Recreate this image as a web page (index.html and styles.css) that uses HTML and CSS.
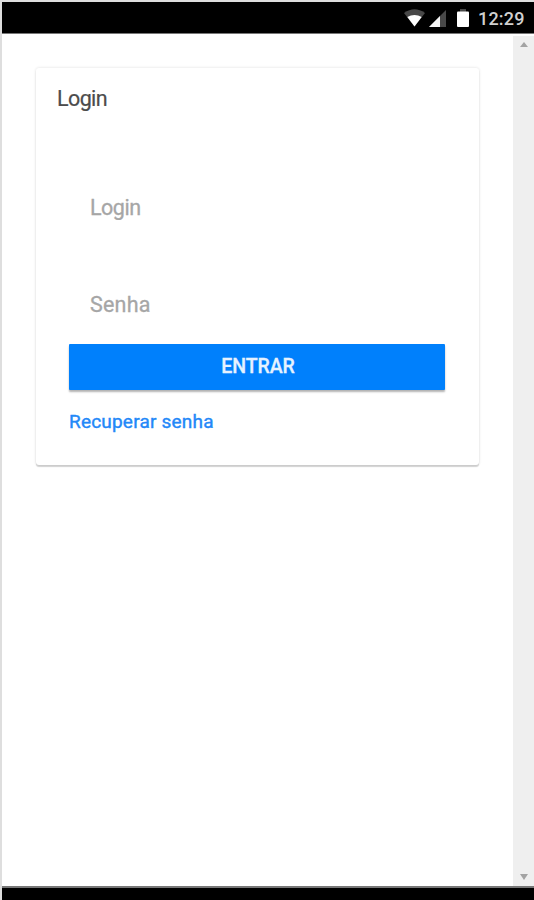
FILE: index.html
```html
<!DOCTYPE html>
<html lang="pt-BR">
<head>
<meta charset="utf-8">
<title>Login</title>
<link rel="stylesheet" href="styles.css">
</head>
<body>
<div class="device">
  <header class="status-bar">
    <svg class="wifi" width="21" height="18" viewBox="0 0 21 18"><path d="M0 4Q10.500-3.500 21 4L10.500 17.500Z" fill="#484848"/><path d="M3.300 8Q10.500 4 17.700 8L10.500 17.500Z" fill="#fff"/></svg>
    <svg class="signal" width="17" height="17" viewBox="0 0 17 17"><path d="M0 17L17 0V17Z" fill="#484848"/><path d="M0 17L11 6V17Z" fill="#f5f5f5"/></svg>
    <svg class="battery" width="12" height="18" viewBox="0 0 12 18"><path d="M3 0H9V3H3Z" fill="#484848"/><rect y="2.500" width="12" height="15.500" rx="1" fill="#fff"/></svg>
    <time class="clock">12:29</time>
  </header>
  <div class="viewport">
    <main class="content">
      <section class="card">
        <h1 class="card-title">Login</h1>
        <form class="form">
          <input class="field" type="text" placeholder="Login" aria-label="Login">
          <input class="field" type="password" placeholder="Senha" aria-label="Senha">
          <button class="submit" type="button">ENTRAR</button>
          <a class="recover" href="#">Recuperar senha</a>
        </form>
      </section>
    </main>
    <div class="scrollbar">
      <svg width="8" height="5" viewBox="0 0 8 5"><path d="M4 0L8 5H0Z" fill="#a3a3a3"/></svg>
      <svg width="8" height="6" viewBox="0 0 8 6"><path d="M0 0H8L4 6Z" fill="#a3a3a3"/></svg>
    </div>
  </div>
  <footer class="nav-bar"></footer>
</div>
</body>
</html>
```
FILE: styles.css
```css
* { box-sizing: border-box; }
body { margin: 0; background: #fff; font-family: Roboto, sans-serif; }
.device {
  height: 900px;
  display: flex;
  flex-direction: column;
  border-left: 2px solid #dedede;
  border-top: 2px solid #dedede;
  overflow: hidden;
}
.status-bar {
  height: 32px;
  flex: none;
  display: flex;
  align-items: flex-start;
  justify-content: flex-end;
  background: #000;
  border-bottom: 1px solid #777;
  padding: 7px 10px 0 0;
}
.status-bar svg { display: block; }
.wifi { margin-right: 4px; }
.signal { margin: 1px 11px 0 0; }
.battery { margin-right: 9px; }
.clock {
  width: 46px;
  color: #d0d0d0;
  font: 500 18px/20px Roboto, sans-serif;
  letter-spacing: 0.2px;
  white-space: nowrap;
}
.viewport { flex: 1; display: flex; min-height: 0; }
.content { flex: 1; padding: 34px 34px 0; }
.card {
  height: 397px;
  background: #fff;
  border-radius: 3px;
  padding: 17px 34px 0 33px;
  box-shadow: 0 2px 1px rgba(0, 0, 0, 0.16), 0 0 3px rgba(0, 0, 0, 0.14);
}
.card-title {
  margin: 0 0 0 -12px;
  color: #4c4c4c;
  font-size: 21.500px;
  font-weight: 400;
  line-height: 28px;
  letter-spacing: -0.6px;
  -webkit-text-stroke: 0.2px;
}
.form { display: flex; flex-direction: column; padding-top: 76px; }
.field {
  height: 36px;
  margin: 0 0 61px;
  padding: 0 21px;
  border: 0;
  outline: 0;
  background: none;
  font: 21.500px Roboto, sans-serif;
  letter-spacing: -0.5px;
  -webkit-text-stroke: 0.3px;
}
.field[type="password"] { margin-bottom: 22px; letter-spacing: 0.2px; }
.field::placeholder { color: #a6a6a6; opacity: 1; }
.submit {
  height: 46px;
  border: 0;
  border-radius: 1px;
  background: #0080fc;
  color: #e6f2ff;
  font: 500 19.500px Roboto, sans-serif;
  letter-spacing: -0.1px;
  padding-bottom: 2px;
  padding-left: 8px;
  -webkit-text-stroke: 0.3px;
  box-shadow: 0 2px 2px rgba(0, 0, 0, 0.3);
}
.recover {
  margin-top: 20px;
  color: #2388f8;
  font-size: 19px;
  line-height: 24px;
  letter-spacing: 0.2px;
  text-decoration: none;
  -webkit-text-stroke: 0.4px;
}
.scrollbar {
  width: 21px;
  margin-top: 2px;
  padding: 6px 0 6px;
  background: #efefef;
  display: flex;
  flex-direction: column;
  align-items: center;
  justify-content: space-between;
}
.nav-bar { height: 14px; flex: none; background: #000; border-top: 2px solid #777; }
```
